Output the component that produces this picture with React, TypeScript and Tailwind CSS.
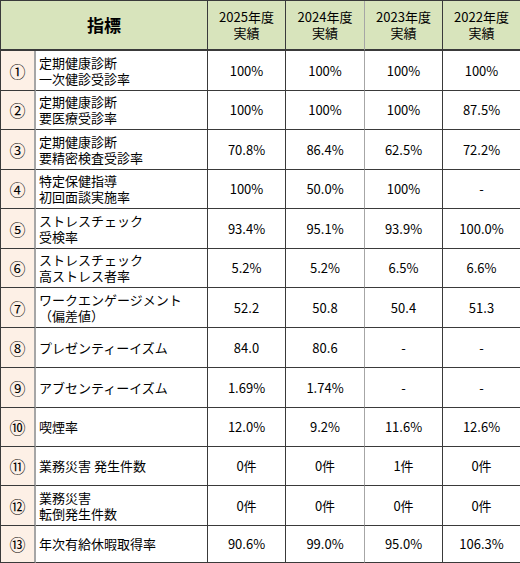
import React from "react";

type Row = {
  no: string;
  label: string[];
  v: string[];
  h: string;
};

const rows: Row[] = [
  { no: "①", label: ["定期健康診断", "一次健診受診率"], v: ["100%", "100%", "100%", "100%"], h: "h-[40px]" },
  { no: "②", label: ["定期健康診断", "要医療受診率"], v: ["100%", "100%", "100%", "87.5%"], h: "h-[39px]" },
  { no: "③", label: ["定期健康診断", "要精密検査受診率"], v: ["70.8%", "86.4%", "62.5%", "72.2%"], h: "h-[40px]" },
  { no: "④", label: ["特定保健指導", "初回面談実施率"], v: ["100%", "50.0%", "100%", "-"], h: "h-[39px]" },
  { no: "⑤", label: ["ストレスチェック", "受検率"], v: ["93.4%", "95.1%", "93.9%", "100.0%"], h: "h-[40px]" },
  { no: "⑥", label: ["ストレスチェック", "高ストレス者率"], v: ["5.2%", "5.2%", "6.5%", "6.6%"], h: "h-[39px]" },
  { no: "⑦", label: ["ワークエンゲージメント", "（偏差値）"], v: ["52.2", "50.8", "50.4", "51.3"], h: "h-[40px]" },
  { no: "⑧", label: ["プレゼンティーイズム"], v: ["84.0", "80.6", "-", "-"], h: "h-[40px]" },
  { no: "⑨", label: ["アブセンティーイズム"], v: ["1.69%", "1.74%", "-", "-"], h: "h-[40px]" },
  { no: "⑩", label: ["喫煙率"], v: ["12.0%", "9.2%", "11.6%", "12.6%"], h: "h-[39px]" },
  { no: "⑪", label: ["業務災害 発生件数"], v: ["0件", "0件", "1件", "0件"], h: "h-[39px]" },
  { no: "⑫", label: ["業務災害", "転倒発生件数"], v: ["0件", "0件", "0件", "0件"], h: "h-[40px]" },
  { no: "⑬", label: ["年次有給休暇取得率"], v: ["90.6%", "99.0%", "95.0%", "106.3%"], h: "h-[37px]" },
];

const years = ["2025年度", "2024年度", "2023年度", "2022年度"];
const valBorder = [
  "border-r border-r-[#3a3a3a]",
  "border-r border-r-[#a6a6a6]",
  "border-r border-r-[#3a3a3a]",
  "border-r border-r-[#3a3a3a]",
];

export default function App() {
  return (
    <div className="w-[520px] h-[563px] bg-white text-black font-['Noto_Sans_CJK_JP','Noto_Sans',sans-serif] text-[13px] leading-[16px]">
      <div className="grid grid-cols-[35px_172px_78px_79px_78px_78px] border-t border-l border-[#3a3a3a]">
        <div className="col-span-2 h-[50px] bg-[#d8e4bc] border-r border-r-[#3a3a3a] border-b-2 border-b-[#3a3a3a] flex items-center justify-center font-bold text-[17px]">
          指標
        </div>
        {years.map((y, i) => (
          <div
            key={y}
            className={`h-[50px] bg-[#d8e4bc] border-b-2 border-b-[#3a3a3a] ${valBorder[i]} flex flex-col items-center justify-center`}
          >
            <span className="block leading-[16px]">{y}</span>
            <span className="block leading-[16px]">実績</span>
          </div>
        ))}
        {rows.map((r) => (
          <React.Fragment key={r.no}>
            <div className={`${r.h} bg-[#fdf0e6] border-r-2 border-r-[#a6a6a6] border-b border-b-[#3a3a3a] flex items-center justify-center text-[16px] leading-[18px]`}>
              {r.no}
            </div>
            <div className={`${r.h} border-r border-r-[#3a3a3a] border-b border-b-[#3a3a3a] flex flex-col justify-center pl-[3px]`}>
              {r.label.map((l) => (
                <span key={l} className="block whitespace-nowrap leading-[16px]">{l}</span>
              ))}
            </div>
            {r.v.map((v, i) => (
              <div
                key={i}
                className={`${r.h} ${valBorder[i]} border-b border-b-[#3a3a3a] flex items-center justify-center`}
              >
                {v}
              </div>
            ))}
          </React.Fragment>
        ))}
      </div>
    </div>
  );
}
